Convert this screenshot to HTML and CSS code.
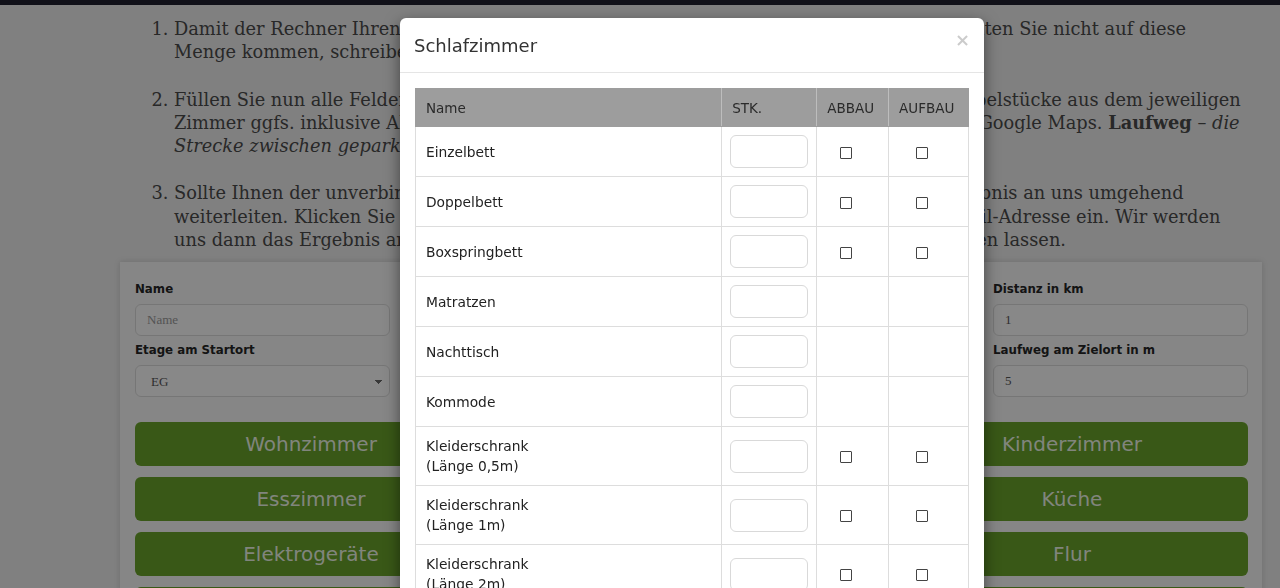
FILE: index.html
```html
<!DOCTYPE html>
<html lang="de">
<head>
<meta charset="utf-8">
<title>Umzugsrechner</title>
<link rel="stylesheet" href="styles.css">
</head>
<body>
<div class="topbar"></div>
<main class="page">
  <ol class="steps">
    <li><span class="ln">Damit der Rechner Ihren Umzug korrekt kalkuliert, benötigen wir mindestens 10 m³. Sollten Sie nicht auf diese</span><br><span class="ln">Menge kommen, schreiben Sie uns bitte direkt über das Kontaktformular an.</span></li>
    <li><span class="ln">Füllen Sie nun alle Felder aus und wählen Sie bitte die exakte Anzahl der benötigten Möbelstücke aus dem jeweiligen</span><br><span class="ln">Zimmer ggfs. inklusive Ab- sowie Aufbau aus. <b>Distanz</b> – <i>die Entfernung zum Zielort</i> laut Google Maps. <b>Laufweg</b> – <i>die</i></span><br><span class="ln"><i>Strecke zwischen geparktem LKW und Haustür.</i></span></li>
    <li><span class="ln">Sollte Ihnen der unverbindliche Kostenvoranschlag zusagen, so können Sie nun das Ergebnis an uns umgehend</span><br><span class="ln">weiterleiten. Klicken Sie dazu bitte unten auf „Anfrage senden“ und geben Sie Ihre E-Mail-Adresse ein. Wir werden</span><br><span class="ln">uns dann das Ergebnis ansehen und Ihnen zeitnah ein unverbindliches Angebot zukommen lassen.</span></li>
  </ol>

  <section class="card">
    <div class="fields">
      <div class="field-col">
        <label class="lbl">Name</label>
        <input class="inp" type="text" placeholder="Name">
        <label class="lbl">Etage am Startort</label>
        <select class="inp sel"><option>EG</option></select>
      </div>
      <div class="field-col">
        <label class="lbl">Startort</label>
        <input class="inp" type="text" placeholder="PLZ">
        <label class="lbl">Aufzug am Startort</label>
        <select class="inp sel"><option>Nein</option></select>
      </div>
      <div class="field-col">
        <label class="lbl">Zielort</label>
        <input class="inp" type="text" placeholder="PLZ">
        <label class="lbl">Etage am Zielort</label>
        <select class="inp sel"><option>EG</option></select>
      </div>
      <div class="field-col">
        <label class="lbl">Distanz in km</label>
        <input class="inp" type="text" value="1">
        <label class="lbl">Laufweg am Zielort in m</label>
        <input class="inp" type="text" value="5">
      </div>
    </div>
    <div class="rooms">
      <button class="room">Wohnzimmer</button>
      <button class="room">Schlafzimmer</button>
      <button class="room">Kinderzimmer</button>
      <button class="room">Esszimmer</button>
      <button class="room">Badezimmer</button>
      <button class="room">Küche</button>
      <button class="room">Elektrogeräte</button>
      <button class="room">Arbeitszimmer</button>
      <button class="room">Flur</button>
      <button class="room">Keller</button>
      <button class="room">Dachboden</button>
      <button class="room">Sonstiges</button>
    </div>
  </section>
</main>

<div class="backdrop"></div>

<div class="modal">
  <div class="modal-head">
    <h4 class="modal-title">Schlafzimmer</h4>
    <span class="close">×</span>
  </div>
  <div class="modal-body">
    <table class="items">
      <thead>
        <tr><th class="c-name">Name</th><th class="c-stk">STK.</th><th class="c-ab">ABBAU</th><th class="c-auf">AUFBAU</th></tr>
      </thead>
      <tbody>
        <tr><td class="n">Einzelbett</td><td class="q"><input class="qty" type="text"></td><td class="cb"><input class="chk" type="checkbox"></td><td class="cb"><input class="chk" type="checkbox"></td></tr>
        <tr><td class="n">Doppelbett</td><td class="q"><input class="qty" type="text"></td><td class="cb"><input class="chk" type="checkbox"></td><td class="cb"><input class="chk" type="checkbox"></td></tr>
        <tr><td class="n">Boxspringbett</td><td class="q"><input class="qty" type="text"></td><td class="cb"><input class="chk" type="checkbox"></td><td class="cb"><input class="chk" type="checkbox"></td></tr>
        <tr><td class="n">Matratzen</td><td class="q"><input class="qty" type="text"></td><td class="cb"></td><td class="cb"></td></tr>
        <tr><td class="n">Nachttisch</td><td class="q"><input class="qty" type="text"></td><td class="cb"></td><td class="cb"></td></tr>
        <tr><td class="n">Kommode</td><td class="q"><input class="qty" type="text"></td><td class="cb"></td><td class="cb"></td></tr>
        <tr><td class="n">Kleiderschrank<br>(Länge 0,5m)</td><td class="q"><input class="qty" type="text"></td><td class="cb"><input class="chk" type="checkbox"></td><td class="cb"><input class="chk" type="checkbox"></td></tr>
        <tr><td class="n">Kleiderschrank<br>(Länge 1m)</td><td class="q"><input class="qty" type="text"></td><td class="cb"><input class="chk" type="checkbox"></td><td class="cb"><input class="chk" type="checkbox"></td></tr>
        <tr><td class="n">Kleiderschrank<br>(Länge 2m)</td><td class="q"><input class="qty" type="text"></td><td class="cb"><input class="chk" type="checkbox"></td><td class="cb"><input class="chk" type="checkbox"></td></tr>
        <tr><td class="n">Kleiderschrank<br>(Länge 3m)</td><td class="q"><input class="qty" type="text"></td><td class="cb"><input class="chk" type="checkbox"></td><td class="cb"><input class="chk" type="checkbox"></td></tr>
      </tbody>
    </table>
  </div>
</div>
</body>
</html>
```
FILE: styles.css
```css
html, body {
  margin: 0;
  padding: 0;
  overflow: hidden;
  height: 100%;
}
body {
  background: #e9e9e9;
  font-family: "DejaVu Sans", sans-serif;
  color: #333;
}
.topbar {
  height: 5px;
  background: #1f1f2e;
}
.page {
  padding-top: 12px;
}
.steps {
  margin: 0 0 0 155px;
  padding-left: 19px;
  font-family: "DejaVu Serif", serif;
  font-size: 17.8px;
  line-height: 23.3px;
  color: #4a4a4a;
}
.steps li {
  margin-bottom: 24px;
}
.steps li:last-child {
  margin-bottom: 0;
}
.ln {
  white-space: nowrap;
}
.card {
  margin: 11px 18px 0 120px;
  background: #f5f5f5;
  box-shadow: 0 0 6px rgba(0,0,0,0.15);
  padding: 18px 14px 30px 15px;
}
.fields {
  display: grid;
  grid-template-columns: repeat(4, 255px);
  column-gap: 31px;
}
.field-col {
  display: flex;
  flex-direction: column;
}
.lbl {
  font-weight: bold;
  font-size: 11.8px;
  line-height: 18px;
  color: #262626;
  margin-bottom: 6px;
}
.inp {
  box-sizing: border-box;
  height: 32px;
  border: 1px solid #d8d8d8;
  border-radius: 6px;
  background-color: #f7f7f7;
  font-family: "Liberation Serif", serif;
  font-size: 13px;
  color: #555;
  padding: 0 11px;
  margin: 0 0 5px 0;
}
.inp::placeholder {
  color: #999;
}
.sel {
  appearance: none;
  -webkit-appearance: none;
  padding-left: 15px;
  background-image:
    linear-gradient(45deg, transparent 50%, #666 50%),
    linear-gradient(135deg, #666 50%, transparent 50%);
  background-position: calc(100% - 10px) 14px, calc(100% - 6px) 14px;
  background-size: 4px 4px, 4px 4px;
  background-repeat: no-repeat;
}
.rooms {
  margin-top: 20px;
  display: grid;
  grid-template-columns: repeat(3, 1fr);
  column-gap: 28.5px;
  row-gap: 11px;
}
.room {
  height: 44px;
  border: none;
  border-radius: 6px;
  background: #68a02b;
  color: rgba(255,255,255,0.88);
  font-family: "DejaVu Sans", sans-serif;
  font-size: 20px;
  padding: 0;
}
.backdrop {
  position: fixed;
  inset: 0;
  background: rgba(0,0,0,0.45);
  z-index: 10;
}
.modal {
  position: absolute;
  left: 400px;
  top: 18px;
  width: 584px;
  background: #fff;
  border-radius: 6px;
  box-shadow: 0 5px 15px rgba(0,0,0,0.5);
  z-index: 20;
}
.modal-head {
  display: flex;
  justify-content: space-between;
  align-items: flex-start;
  padding: 15px 15px 14px 14px;
  border-bottom: 1px solid #e5e5e5;
}
.modal-title {
  margin: 0;
  font-weight: normal;
  font-size: 18px;
  line-height: 25px;
  color: #333;
}
.close {
  font-size: 18px;
  font-weight: bold;
  line-height: 18px;
  color: #000;
  opacity: 0.2;
  margin-top: -2px;
  margin-right: -1px;
}
.modal-body {
  padding: 15px 15px 14px;
}
.items {
  width: 554px;
  border-collapse: collapse;
  font-size: 13.8px;
  color: #222;
}
.items th {
  background: #9d9d9d;
  height: 37px;
  padding: 0 10px;
  text-align: left;
  font-weight: normal;
  font-size: 13.5px;
  color: #2a2a2a;
  border: 1px solid #bdbdbd;
  border-top-color: #9d9d9d;
  border-bottom: 1px solid #9d9d9d;
}
.items th.c-name { width: 289px; border-left-color: #9d9d9d; }
.items th.c-stk { width: 72px; }
.items th.c-ab { width: 51px; }
.items th.c-auf { width: 59px; border-right-color: #9d9d9d; }
.items td {
  border: 1px solid #ddd;
  padding: 8px;
  vertical-align: middle;
}
.items td.n {
  padding: 9px 10px;
  line-height: 20px;
}
.items td.cb {
  text-align: center;
  padding: 0 14px 0 0;
}
.qty {
  display: block;
  box-sizing: border-box;
  width: 78px;
  height: 33px;
  border: 1px solid #d9d9d9;
  border-radius: 6px;
  background: #fff;
  margin: 0;
}
.chk {
  appearance: none;
  -webkit-appearance: none;
  display: inline-block;
  vertical-align: middle;
  width: 12px;
  height: 12px;
  margin: 0;
  border: 1px solid #444;
  border-radius: 1px;
  background: #fff;
}
```
